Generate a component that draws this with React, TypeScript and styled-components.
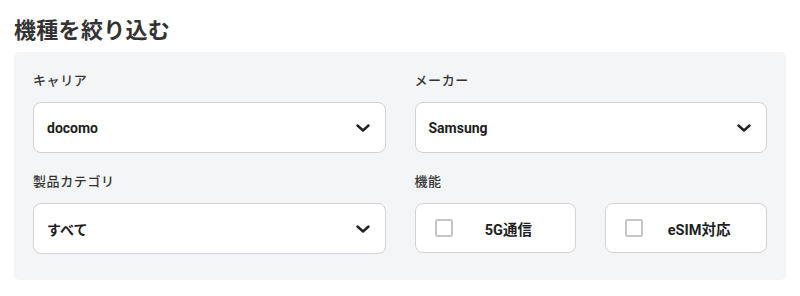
import React from "react";
import styled, { createGlobalStyle } from "styled-components";

const Global = createGlobalStyle`
  html, body { margin: 0; padding: 0; background: #ffffff; }
  body { font-family: Roboto, "Noto Sans CJK JP", sans-serif; color: #222; }
`;

const Page = styled.div`
  padding: 0 14px;
  width: 800px;
  box-sizing: border-box;
`;

const Title = styled.h2`
  margin: 12px 0 8px;
  font-family: "Noto Sans CJK JP", sans-serif;
  font-size: 22px;
  line-height: 32px;
  font-weight: 700;
  color: #333;
  letter-spacing: 0.3px;
`;

const Panel = styled.div`
  background: #f4f5f7;
  border-radius: 5px;
  padding: 19px 19px 26px;
  display: grid;
  grid-template-columns: 1fr 1fr;
  column-gap: 29px;
  row-gap: 19px;
`;

const Field = styled.div`
  display: flex;
  flex-direction: column;
  gap: 13px;
`;

const Label = styled.div`
  font-family: "Noto Sans CJK JP", sans-serif;
  font-size: 13px;
  line-height: 18px;
  font-weight: 500;
  color: #333;
  letter-spacing: 0.6px;
`;

const Select = styled.div`
  height: 51px;
  box-sizing: border-box;
  background: #fff;
  border: 1.5px solid #d2d2d6;
  border-radius: 8px;
  display: flex;
  align-items: center;
  justify-content: space-between;
  padding: 0 15px 0 13px;
  font-family: Roboto, "Noto Sans CJK JP", sans-serif;
  font-size: 14px;
  font-weight: 700;
  color: #1e1e1e;
`;

const Checks = styled.div`
  display: grid;
  grid-template-columns: 1fr 1fr;
  column-gap: 29px;
`;

const CheckButton = styled.label`
  height: 50px;
  box-sizing: border-box;
  background: #fff;
  border: 1.5px solid #d2d2d6;
  border-radius: 8px;
  display: flex;
  align-items: center;
  gap: 8px;
  padding: 0 19px;
  font-family: Roboto, "Noto Sans CJK JP", sans-serif;
  font-size: 14.5px;
  font-weight: 700;
  color: #1e1e1e;
`;

const Box = styled.span`
  width: 18px;
  height: 18px;
  box-sizing: border-box;
  border: 2px solid #c6c6ca;
  border-radius: 2px;
  background: #fff;
  flex: none;
`;

const CheckText = styled.span`
  flex: 1;
  text-align: center;
`;

const Chevron = () => (
  <svg width="14" height="8" viewBox="0 0 14 8" fill="none">
    <path d="M1.5 1.5 L7 6.5 L12.5 1.5" stroke="#222" strokeWidth="2.4" strokeLinecap="round" strokeLinejoin="round" />
  </svg>
);

const SelectField = ({ label, value }: { label: string; value: string }) => (
  <Field>
    <Label>{label}</Label>
    <Select>
      <span>{value}</span>
      <Chevron />
    </Select>
  </Field>
);

export default function App() {
  return (
    <>
      <Global />
      <Page>
        <Title>機種を絞り込む</Title>
        <Panel>
          <SelectField label="キャリア" value="docomo" />
          <SelectField label="メーカー" value="Samsung" />
          <SelectField label="製品カテゴリ" value="すべて" />
          <Field>
            <Label>機能</Label>
            <Checks>
              <CheckButton>
                <Box />
                <CheckText>5G通信</CheckText>
              </CheckButton>
              <CheckButton>
                <Box />
                <CheckText>eSIM対応</CheckText>
              </CheckButton>
            </Checks>
          </Field>
        </Panel>
      </Page>
    </>
  );
}
